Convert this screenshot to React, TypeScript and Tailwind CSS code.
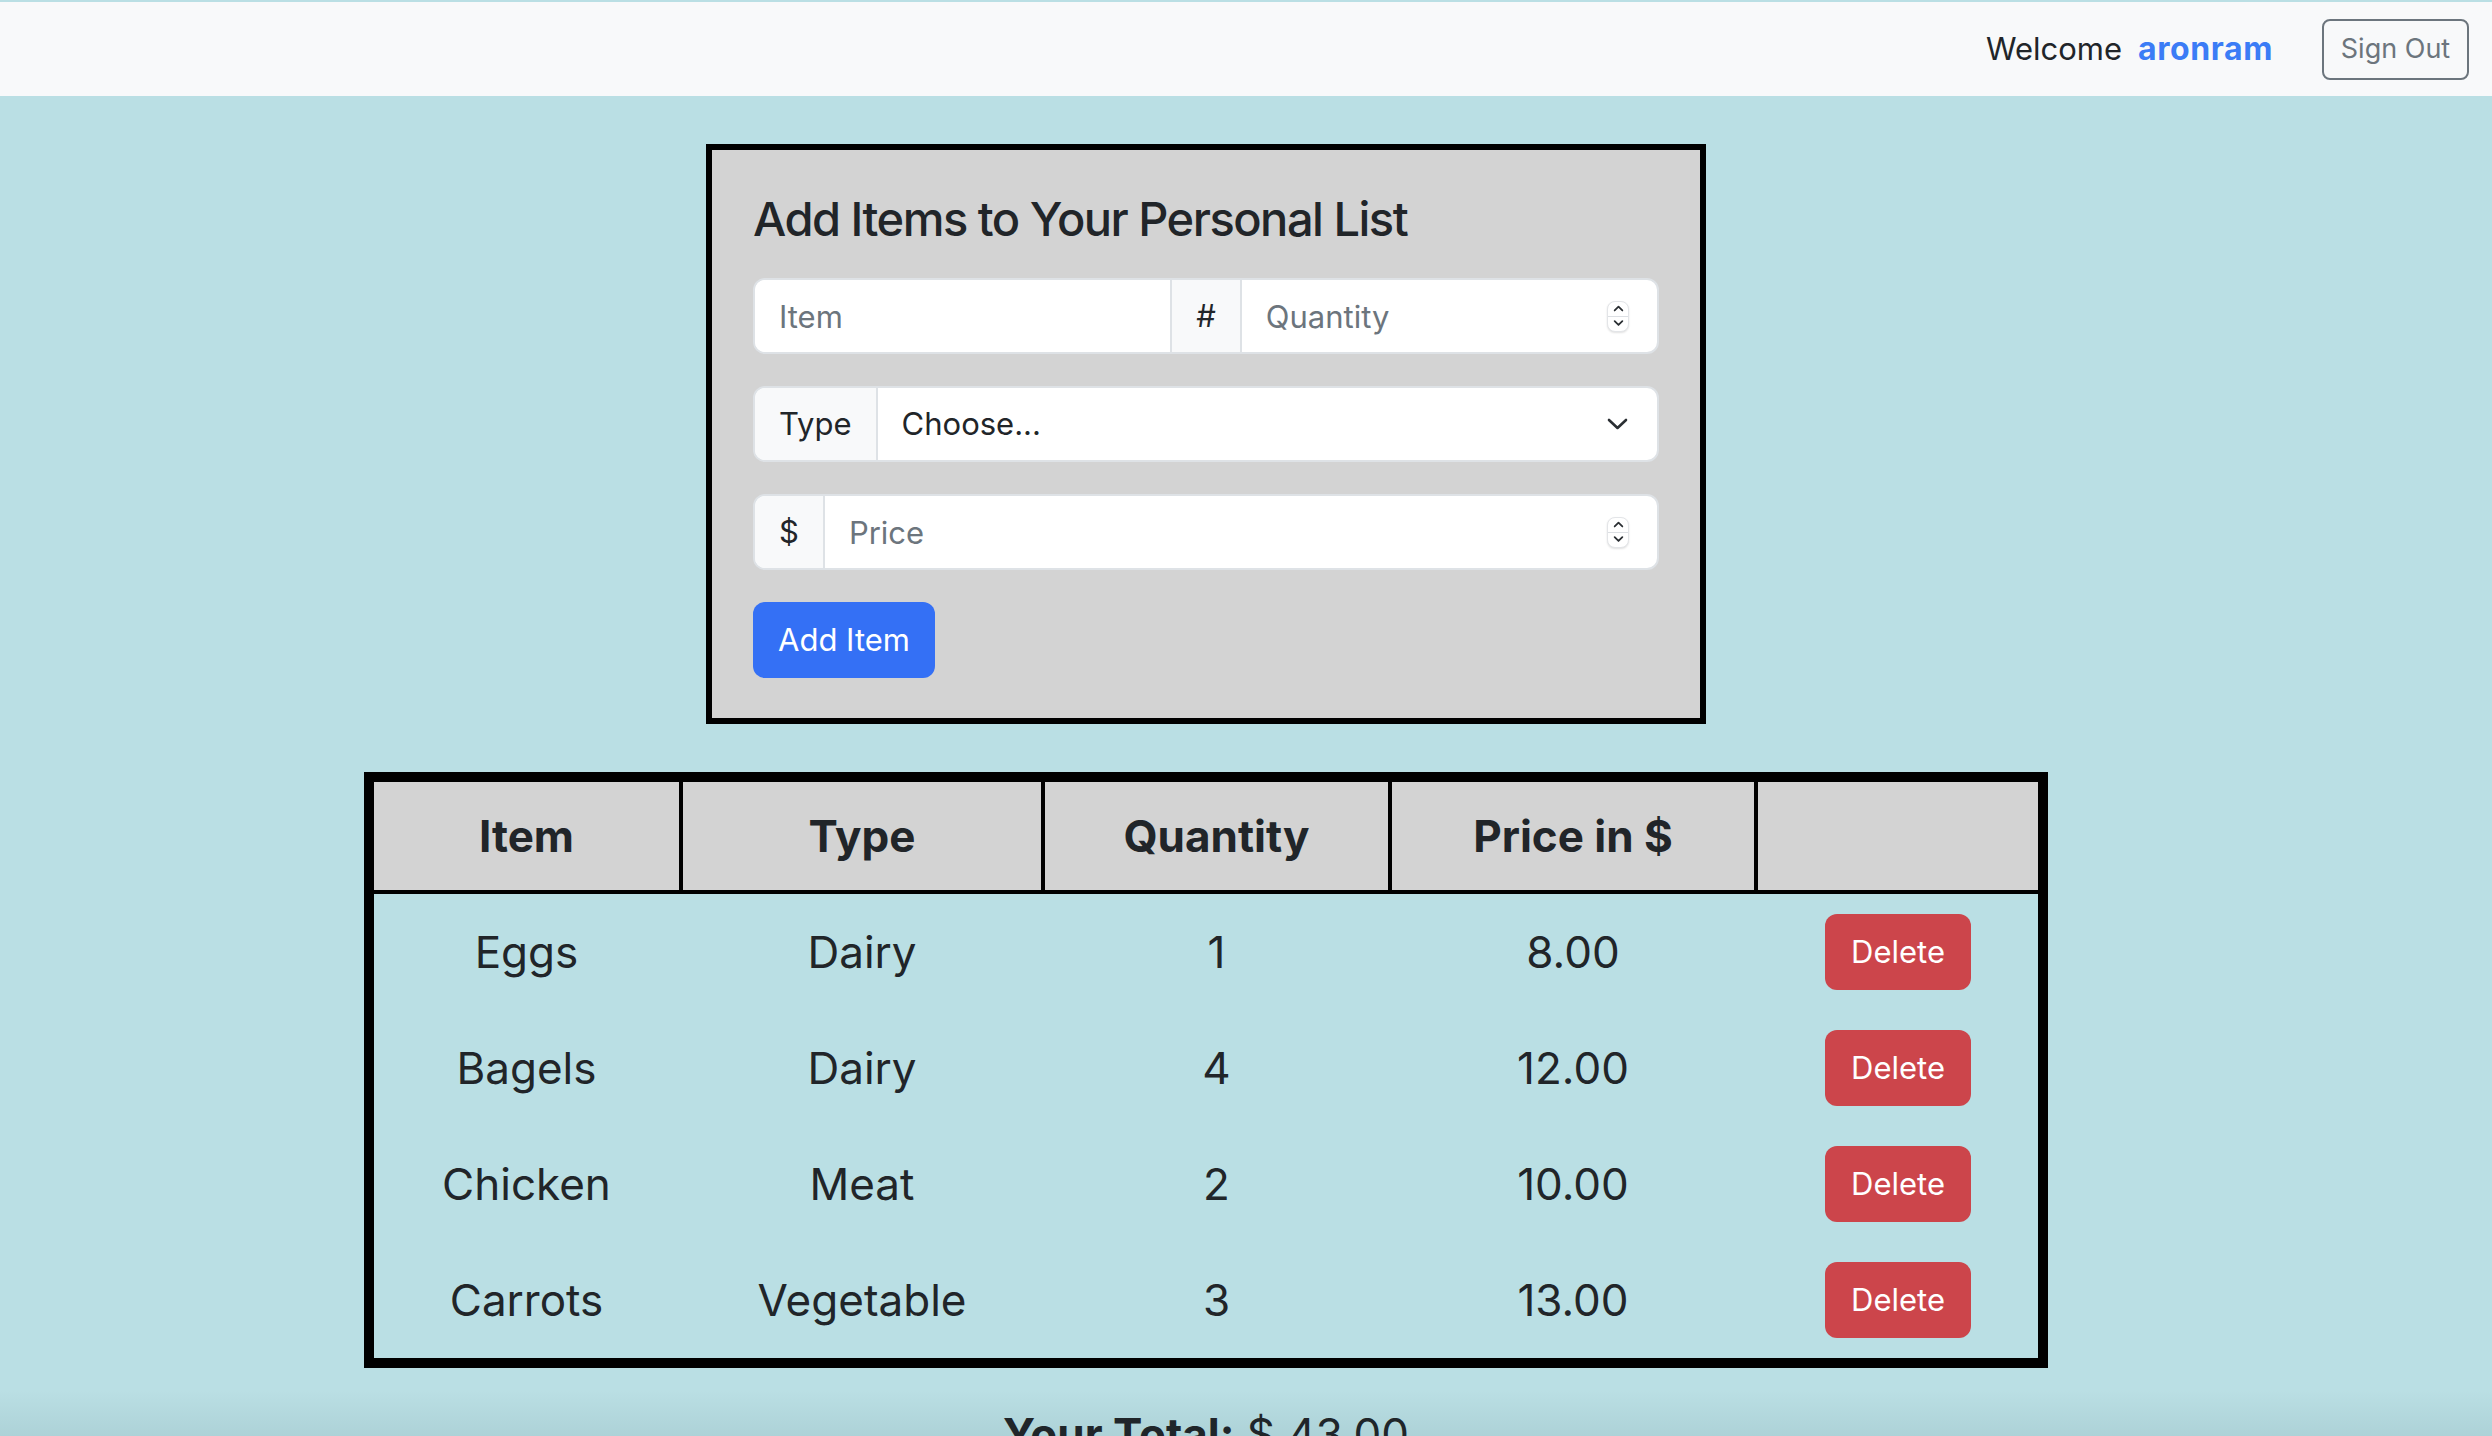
import React from "react";

const groceries = [
  { item: "Eggs", type: "Dairy", qty: 1, price: 8 },
  { item: "Bagels", type: "Dairy", qty: 4, price: 12 },
  { item: "Chicken", type: "Meat", qty: 2, price: 10 },
  { item: "Carrots", type: "Vegetable", qty: 3, price: 13 },
];

const headers = ["Item", "Type", "Quantity", "Price in $", ""];

function Chevron({ up, size = 11 }: { up?: boolean; size?: number }) {
  return (
    <svg width={size} height={size * 0.6} viewBox="0 0 10 6">
      <path
        d={up ? "M1.5 5 L5 1.5 L8.5 5" : "M1.5 1 L5 4.5 L8.5 1"}
        fill="none"
        stroke="#2b2f33"
        strokeWidth="1.6"
        strokeLinecap="round"
        strokeLinejoin="round"
      />
    </svg>
  );
}

function Spinner() {
  return (
    <div className="mr-[28px] flex h-[31px] w-[22px] shrink-0 flex-col overflow-hidden rounded-[8px] border border-[#e3e5e8] bg-white shadow-[0_1px_2px_rgba(0,0,0,0.12)]">
      <div className="flex flex-1 items-center justify-center border-b border-[#dcdfe3]">
        <Chevron up />
      </div>
      <div className="flex flex-1 items-center justify-center">
        <Chevron />
      </div>
    </div>
  );
}

function Addon({ children }: { children: React.ReactNode }) {
  return (
    <div className="flex h-full items-center bg-[#f8f9fa] px-[24px] text-[#212529]">
      {children}
    </div>
  );
}

function Field({ placeholder, spinner }: { placeholder: string; spinner?: boolean }) {
  return (
    <div className="flex h-full w-0 min-w-0 flex-1 items-center">
      <input
        placeholder={placeholder}
        className="h-full w-0 min-w-0 flex-1 bg-white px-[24px] outline-none placeholder:text-[#6c757d]"
      />
      {spinner && <Spinner />}
    </div>
  );
}

export default function App() {
  const total = groceries.reduce((sum, g) => sum + g.price, 0);

  return (
    <div className="relative h-[1436px] overflow-hidden bg-[#badfe4] pt-[2px] font-['Inter',sans-serif] text-[#212529]">
      {/* Navbar */}
      <nav className="flex h-[94px] items-center justify-end bg-[#f8f9fa] pr-[23px]">
        <span className="text-[31px]">Welcome</span>
        <span className="ml-[16px] text-[32px] font-bold tracking-[0.6px] text-[#3b7cf6]">aronram</span>
        <button className="ml-[49px] h-[61px] w-[147px] rounded-[8px] border-2 border-[#6c757d] text-[27px] text-[#6c757d]">
          Sign Out
        </button>
      </nav>

      <div className="flex w-[2412px] flex-col items-center">
        {/* Add form */}
        <div className="mt-[48px] w-[1000px] border-[6px] border-black bg-[#d3d3d3] px-[41px] py-[40px]">
          <h4 className="mb-[30px] text-[47px] leading-[58px] font-medium tracking-[-1.5px]">
            Add Items to Your Personal List
          </h4>

          <div className="mb-[32px] flex h-[76px] overflow-hidden rounded-[12px] border-2 border-[#dee2e6] bg-white text-[31px]">
            <Field placeholder="Item" />
            <div className="h-full shrink-0 border-x-2 border-[#dee2e6]">
              <Addon>#</Addon>
            </div>
            <Field placeholder="Quantity" spinner />
          </div>

          <div className="mb-[32px] flex h-[76px] overflow-hidden rounded-[12px] border-2 border-[#dee2e6] bg-white text-[31px]">
            <div className="h-full border-r-2 border-[#dee2e6]">
              <Addon>Type</Addon>
            </div>
            <div className="flex h-full flex-1 items-center justify-between pl-[24px] pr-[29px]">
              <span>Choose...</span>
              <svg width="21" height="12" viewBox="0 0 21 12">
                <path
                  d="M2 2 L10.5 10 L19 2"
                  fill="none"
                  stroke="#2b2f33"
                  strokeWidth="2.6"
                  strokeLinecap="round"
                  strokeLinejoin="round"
                />
              </svg>
            </div>
          </div>

          <div className="mb-[32px] flex h-[76px] overflow-hidden rounded-[12px] border-2 border-[#dee2e6] bg-white text-[31px]">
            <div className="h-full border-r-2 border-[#dee2e6]">
              <Addon>$</Addon>
            </div>
            <Field placeholder="Price" spinner />
          </div>

          <button className="h-[76px] w-[182px] rounded-[12px] bg-[#3470f5] text-[31px] text-white">
            Add Item
          </button>
        </div>

        {/* List table */}
        <div className="mt-[48px] w-[1684px] border-[10px] border-black">
          <div className="grid grid-cols-[309px_362px_347px_366px_280px] border-b-4 border-black bg-[#d3d3d3]">
            {headers.map((h, i) => (
              <div
                key={i}
                className={
                  "flex h-[108px] items-center justify-center text-[44px] font-bold" +
                  (i < headers.length - 1 ? " border-r-4 border-black" : "")
                }
              >
                {h}
              </div>
            ))}
          </div>
          {groceries.map((g) => (
            <div
              key={g.item}
              className="grid h-[116px] grid-cols-[309px_362px_347px_366px_280px] items-center text-[44px]"
            >
              <div className="pr-[4px] text-center">{g.item}</div>
              <div className="pr-[4px] text-center">{g.type}</div>
              <div className="pr-[4px] text-center">{g.qty}</div>
              <div className="pr-[4px] text-center">{g.price.toFixed(2)}</div>
              <div className="flex justify-center">
                <button className="h-[76px] w-[146px] rounded-[12px] bg-[#cc454b] text-[31px] text-white">
                  Delete
                </button>
              </div>
            </div>
          ))}
        </div>

        <h3 className="mt-[40px] text-[44px] leading-[53px]">
          <span className="font-bold">Your Total:</span> $ {total.toFixed(2)}
        </h3>
      </div>

      {/* bottom fade */}
      <div className="pointer-events-none absolute inset-x-0 bottom-0 h-[46px] bg-gradient-to-b from-transparent to-[rgba(0,40,50,0.07)]" />
    </div>
  );
}
